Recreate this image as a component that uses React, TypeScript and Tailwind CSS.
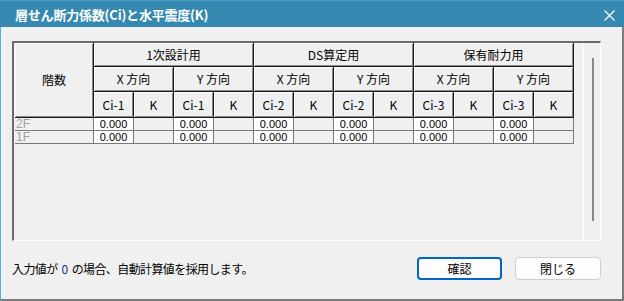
import React from "react";

const hdr =
  "flex items-center justify-center bg-[#f0f0f0] border-r border-b border-[#1a1a1a] shadow-[inset_1px_1px_0_#ffffff,inset_-1px_-1px_0_#8a8a8a] text-[12px] text-black";

function DataRow({ label }: { label: string }) {
  const cells = [];
  for (let i = 0; i < 12; i++) {
    const isCi = i % 2 === 0;
    cells.push(
      <div
        key={i}
        className={
          isCi
            ? "flex items-center justify-center bg-white border-r border-b border-[#7a7a7a] text-[11px] leading-none text-black font-['Liberation_Sans',sans-serif]"
            : "bg-[#f0f0f0] border-r border-b border-[#7a7a7a]"
        }
      >
        {isCi ? "0.000" : null}
      </div>
    );
  }
  return (
    <>
      <div className="flex items-center pl-[1px] bg-[#f0f0f0] border-r border-b border-[#7a7a7a] text-[12px] leading-none text-[#a0a0a0] font-['Liberation_Sans',sans-serif]">
        {label}
      </div>
      {cells}
    </>
  );
}

export default function App() {
  const groups = ["1次設計用", "DS算定用", "保有耐力用"];
  const ci = ["Ci-1", "Ci-2", "Ci-3"];
  return (
    <div className="w-[624px] h-[301px] flex flex-col font-['Noto_Sans_CJK_JP',sans-serif] bg-[#f0f0f0] overflow-hidden">
      {/* title bar */}
      <div className="h-[27px] shrink-0 flex items-center justify-between bg-[#3589b0] border-t border-[#4a9cc4] pl-[15px] pr-[9px]">
        <span className="text-white text-[13px] font-bold leading-none tracking-[-0.2px]">
          層せん断力係数(Ci)と水平震度(K)
        </span>
        <svg width="11" height="11" viewBox="0 0 11 11" className="mt-[2px]">
          <path d="M0.5 0.5 L10.5 10.5 M10.5 0.5 L0.5 10.5" stroke="#ffffff" strokeWidth="1.2" />
        </svg>
      </div>
      {/* body */}
      <div className="flex-1 flex flex-col border-l border-[#45b3e4] border-r-2 border-r-[#7a7a7a] border-b-2 border-b-[#7a7a7a] pl-[11px] pr-[21px]">
        {/* frame */}
        <div className="mt-[14px] h-[200px] flex border-t-2 border-l-2 border-[#6b6b6b] border-r border-r-white border-b border-b-white pl-px">
          <div className="grid grid-cols-[79px_repeat(12,40px)] grid-rows-[24px_25px_26px_13px_13px] self-start">
            <div className={hdr + " row-span-3"}>階数</div>
            {groups.map((g) => (
              <div key={g} className={hdr + " col-span-4"}>
                {g}
              </div>
            ))}
            {groups.map((g) => (
              <React.Fragment key={g + "d"}>
                <div className={hdr + " col-span-2"}>X 方向</div>
                <div className={hdr + " col-span-2"}>Y 方向</div>
              </React.Fragment>
            ))}
            {ci.map((c) => (
              <React.Fragment key={c}>
                <div className={hdr}>{c}</div>
                <div className={hdr}>K</div>
                <div className={hdr}>{c}</div>
                <div className={hdr}>K</div>
              </React.Fragment>
            ))}
            <DataRow label="2F" />
            <DataRow label="1F" />
          </div>
          <div className="flex-1" />
          {/* scroll track */}
          <div className="w-[17px] h-full border-l border-white flex justify-center pt-[15px]">
            <div className="w-[2px] h-[163px] bg-[#888888] ml-[1px]" />
          </div>
        </div>
        {/* footer */}
        <div className="mt-[16px] flex items-center">
          <span className="text-[12px] text-black tracking-[-0.6px] leading-none">
            入力値が<span className="text-[#1c2f80] mx-[4px]">0</span>の場合、自動計算値を採用します。
          </span>
          <div className="flex-1" />
          <button className="w-[85px] h-[23px] rounded-[4px] border-2 border-[#0067c0] bg-[#fdfdfd] text-[12px] text-black leading-none">
            確認
          </button>
          <button className="ml-[13px] w-[86px] h-[23px] rounded-[4px] border border-[#cfcfcf] bg-[#fdfdfd] text-[12px] text-black leading-none">
            閉じる
          </button>
        </div>
      </div>
    </div>
  );
}
